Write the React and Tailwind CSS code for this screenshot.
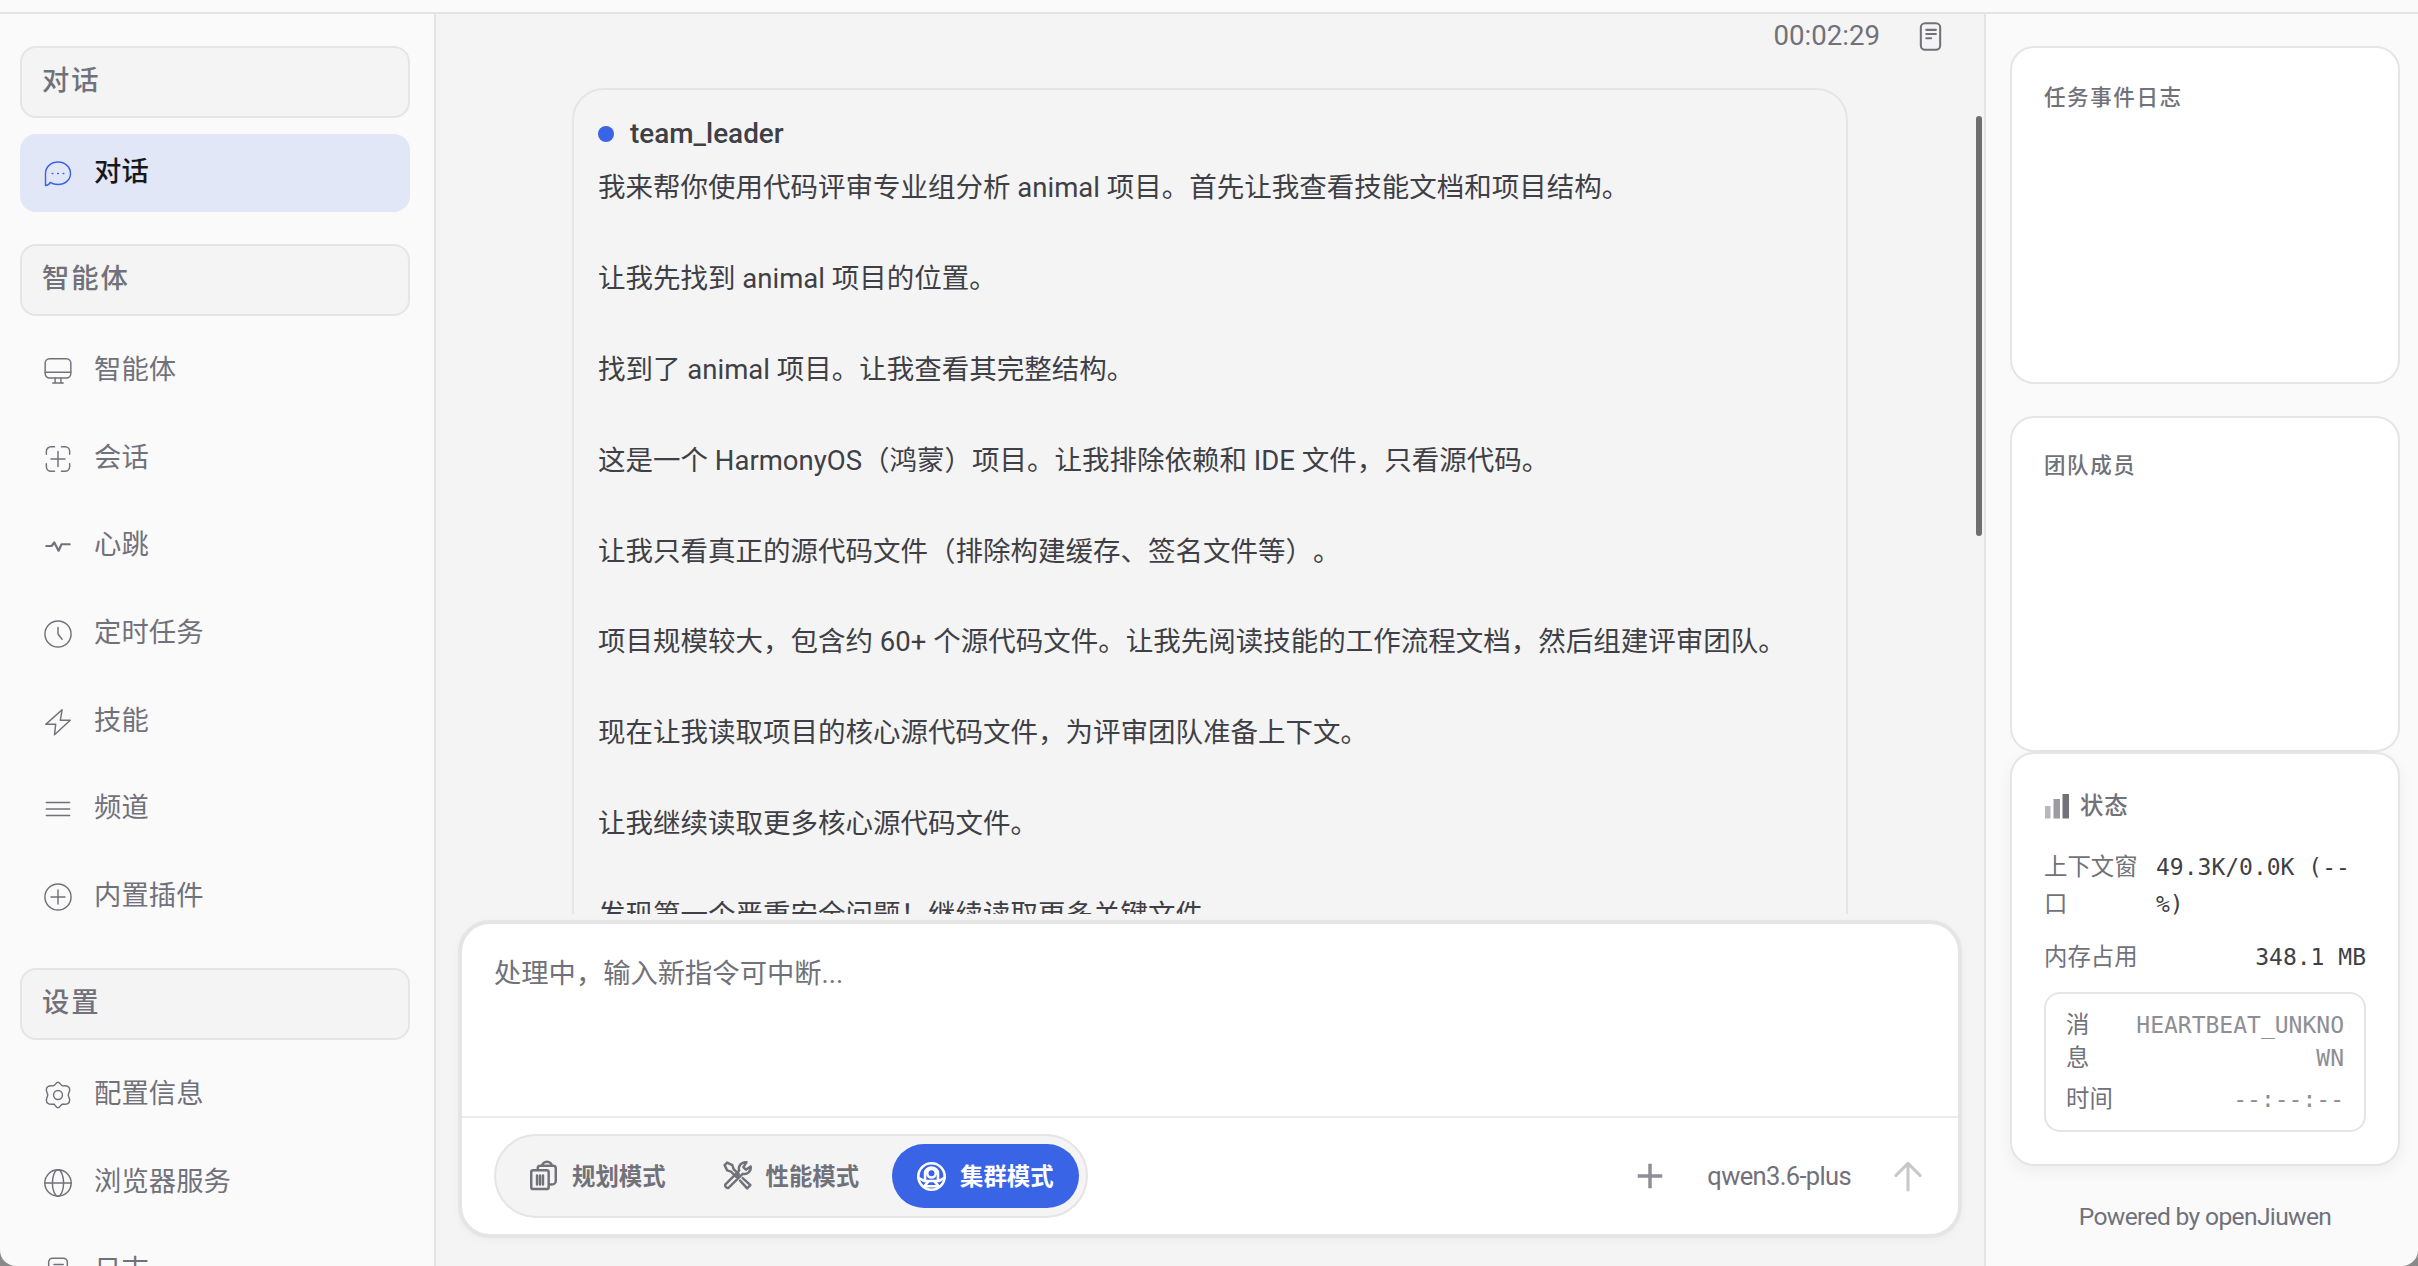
const font = "font-[Roboto,'Noto_Sans_CJK_SC',sans-serif]";

function Icon({ children, className = "h-7 w-7", sw = 1.25 }) {
  return (
    <svg
      viewBox="0 0 24 24"
      fill="none"
      stroke="currentColor"
      strokeWidth={sw}
      strokeLinecap="round"
      strokeLinejoin="round"
      className={`shrink-0 ${className}`}
    >
      {children}
    </svg>
  );
}

const icons = {
  chat: (
    <>
      <path d="M1.300 21.800V11.500C1.300 6 6 1.800 12 1.800S22.700 6 22.700 11.500 18 21 12 21c-2.500 0-4.800-.6-6.600-1.800-.8 1.600-2.200 2.600-4.100 2.600z" />
      <path d="M7 11.500h.6M11.700 11.500h.6M16.400 11.500h.6" />
    </>
  ),
  monitor: (
    <>
      <rect x="1" y="1.500" width="22" height="16.500" rx="3.800" />
      <path d="M1 13h22M9.500 18v3.500M14.500 18v3.500M7.500 22.300h9" />
    </>
  ),
  session: (
    <>
      <path d="M2 8V5.500a4 4 0 0 1 4-4h3M15 1.500h3a4 4 0 0 1 4 4V8M22 16v2.500a4 4 0 0 1-4 4h-3M9 22.500H6a4 4 0 0 1-4-4V16" />
      <path d="M12 5.500v13M6 12h12" />
    </>
  ),
  pulse: <path d="M2 12h4.500l2.300-3 3.700 7 2.500-5.500h7" strokeWidth="1.900" />,
  clock: (
    <>
      <circle cx="12" cy="12" r="11.200" />
      <path d="M12 6.500V12l3.500 4.500" />
    </>
  ),
  bolt: <path d="M15.500 1.500 1.500 14H10l-1 9L22.500 10.500H14z" />,
  menu: <path d="M2 6.500h20M2 12h20M2 17.500h20" />,
  plus: (
    <>
      <circle cx="12" cy="12" r="11.200" />
      <path d="M12 6v12M6 12h12" />
    </>
  ),
  gear: (
    <>
      <path d="M12 1C14 1 14 4.200 16.500 4.200 19.500 3.800 22 4.800 22 7.500 22 9.500 20.800 10.500 20.800 12S22 14.500 22 16.500C22 19.200 19.500 20.200 16.500 19.800 14 19.800 14 23 12 23S10 19.800 7.500 19.800C4.500 20.200 2 19.200 2 16.500 2 14.500 3.200 13.500 3.200 12S2 9.500 2 7.500C2 4.800 4.500 3.800 7.500 4.200 10 4.200 10 1 12 1z" />
      <circle cx="12" cy="12" r="3.800" />
    </>
  ),
  globe: (
    <>
      <circle cx="12" cy="12" r="11.300" />
      <ellipse cx="12" cy="12" rx="4.800" ry="11.300" />
      <path d="M.7 12h22.600" />
    </>
  ),
  log: (
    <>
      <rect x="4" y="1" width="16" height="22" rx="3.500" />
      <path d="M8.500 6.500h8M8.500 10h8M8.500 13.500h4" />
    </>
  ),
};

const groups = [
  { title: "对话", items: [["对话", "chat"]] },
  {
    title: "智能体",
    items: [
      ["智能体", "monitor"],
      ["会话", "session"],
      ["心跳", "pulse"],
      ["定时任务", "clock"],
      ["技能", "bolt"],
      ["频道", "menu"],
      ["内置插件", "plus"],
    ],
  },
  {
    title: "设置",
    items: [
      ["配置信息", "gear"],
      ["浏览器服务", "globe"],
      ["日志", "log"],
    ],
  },
];

const messages = [
  "我来帮你使用代码评审专业组分析 animal 项目。首先让我查看技能文档和项目结构。",
  "让我先找到 animal 项目的位置。",
  "找到了 animal 项目。让我查看其完整结构。",
  "这是一个 HarmonyOS（鸿蒙）项目。让我排除依赖和 IDE 文件，只看源代码。",
  "让我只看真正的源代码文件（排除构建缓存、签名文件等）。",
  "项目规模较大，包含约 60+ 个源代码文件。让我先阅读技能的工作流程文档，然后组建评审团队。",
  "现在让我读取项目的核心源代码文件，为评审团队准备上下文。",
  "让我继续读取更多核心源代码文件。",
  "发现第一个严重安全问题！继续读取更多关键文件",
];

function Sidebar() {
  return (
    <aside className="w-[436px] shrink-0 overflow-hidden border-r-2 border-[#e4e4e6] bg-[#fafafa] pt-8 pl-5">
      {groups.map((group) => (
        <div key={group.title} className="mb-8 w-[390px]">
          <div className="flex h-[72px] items-center rounded-2xl border-2 border-[#e5e5e6] bg-[#f4f4f4] pb-0.5 pl-5 text-[27.300px] font-medium tracking-[1.900px] text-[#71717a]">
            {group.title}
          </div>
          <nav className="mt-4 flex flex-col gap-[9.700px]">
            {group.items.map(([label, icon]) => (
              <div
                key={label}
                className={
                  icon === "chat"
                    ? "flex h-[78px] items-center rounded-2xl bg-[#e1e7f7] pl-6 text-[27.300px] font-medium text-[#18181b]"
                    : "flex h-[78px] items-center rounded-2xl pl-6 text-[27.300px] text-[#71717a]"
                }
              >
                <Icon className={icon === "chat" ? "mt-0.5 h-7 w-7 text-[#3a64e6]" : "h-7 w-7"}>
                  {icons[icon]}
                </Icon>
                <span className="-mt-px ml-[22px] tracking-[.1px]">{label}</span>
              </div>
            ))}
          </nav>
        </div>
      ))}
    </aside>
  );
}

function Composer() {
  return (
    <div className="mx-[22px] mt-1.5 flex h-[318px] shrink-0 flex-col rounded-[32px] border-4 border-[#e5e5e6] bg-white shadow-[0_2px_8px_rgba(0,0,0,0.03)]">
      <div className="h-[192px] pt-[30px] pl-[32px] text-[27.300px] leading-[40px] text-[#71717a]">
        处理中，输入新指令可中断...
      </div>
      <div className="flex flex-1 items-center border-t-2 border-[#ebebec] pr-[34px] pl-8">
        <div className="flex h-[84px] w-[594px] items-center rounded-full border-2 border-[#e5e5e6] bg-[#f4f4f4] pr-[7px] text-[23.400px] font-bold text-[#71717a]">
          <div className="flex items-center pl-[32px]">
            <Icon className="h-[31px] w-[31px]" sw={1.900}>
              <rect x="2.500" y="8" width="13.500" height="14.500" rx="1.500" />
              <path d="M7.500 7.500V6.500a2 2 0 0 1 2-2h10a2 2 0 0 1 2 2V16a3 3 0 0 1-3 3h-2M11 4.500a3.700 3.200 0 0 1 7.400 0zM7 12v7M9.300 12v7M11.600 12v7" />
            </Icon>
            <span className="mt-[3px] ml-[13px]">规划模式</span>
          </div>
          <div className="flex items-center pl-[56px]">
            <Icon className="h-[31px] w-[31px]" sw={1.900}>
              <path d="m2 4 2-2 4 2 1 3 4 4-2 2-4-4-3-1zM22.200 5l-3.700 2.500L16.500 5.500 19 1.800a5 5 0 0 0-5.700 6.400L2.500 19a2 2 0 0 0 2.500 2.500L16 10.700A5 5 0 0 0 22.200 5zM14 16l5.500 6 2.500-2.500L16 14" />
            </Icon>
            <span className="mt-[3px] ml-[13px]">性能模式</span>
          </div>
          <div className="ml-auto flex h-16 w-[187px] items-center rounded-full bg-[#3a64e6] pl-[24px] text-white">
            <Icon className="h-[31px] w-[31px]" sw={2}>
              <circle cx="12" cy="12" r="10.200" />
              <circle cx="12" cy="9.500" r="3.300" />
              <path d="M7 15.500V9.500a5 4.500 0 0 1 10 0v6M2 13l4.500 2.500h11L22 13M6 20l3.500-4M18 20l-3.500-4M7 19.500h10" />
            </Icon>
            <span className="mt-[3px] ml-[13px]">集群模式</span>
          </div>
        </div>
        <div className="ml-auto flex items-center">
          <Icon className="h-8 w-8 text-[#8e8e94]" sw={2.600}>
            <path d="M12 2.800v18.400M2.800 12h18.400" strokeLinecap="butt" />
          </Icon>
          <span className="ml-[41px] text-[25.500px] tracking-[-.65px] text-[#71717a]">qwen3.6-plus</span>
          <Icon className="ml-[41px] h-8 w-8 text-[#c8c8cc]" sw={2.300}>
            <path d="M12 22.500V2.500M3 11.500l9-9 9 9" />
          </Icon>
        </div>
      </div>
    </div>
  );
}

function Chat() {
  return (
    <main className="relative flex min-w-0 flex-1 flex-col bg-[#f4f4f4]">
      <div className="flex h-11 shrink-0 items-center justify-end pr-[39px] text-[27.600px] text-[#71717a]">
        <span>00:02:29</span>
        <Icon className="ml-[36px] h-[29px] w-[29px]" sw={1.700}>{icons.log}</Icon>
      </div>
      <div className="h-[856px] shrink-0 overflow-hidden">
        <div className="mt-[30px] ml-[136px] h-[900px] w-[1276px] rounded-[32px] border-2 border-[#e5e5e6] px-6 pt-6 text-[27.500px] text-[#3f3f46]">
          <div className="flex h-10 items-center">
            <span className="h-4 w-4 rounded-full bg-[#3a64e6]" />
            <span className="ml-4 text-[27.900px] font-medium">team_leader</span>
          </div>
          {messages.map((text) => (
            <p
              key={text}
              className="h-[90.900px] pt-[9px] leading-[50px] whitespace-nowrap [text-spacing-trim:space-all]"
            >
              {text}
            </p>
          ))}
        </div>
      </div>
      <Composer />
      <div className="absolute top-[102px] right-[2px] h-[420px] w-1.5 rounded-full bg-[#6e6e6f]" />
    </main>
  );
}

function StatusPanel() {
  return (
    <aside className="w-[434px] shrink-0 border-l-2 border-[#e4e4e6] bg-[#fafafa] pt-8 pl-6 text-[#71717a]">
      <section className="h-[338px] w-[390px] rounded-3xl border-2 border-[#e5e5e6] bg-white px-8 pt-8 text-[21.500px] leading-[36px] font-medium tracking-[1.600px]">
        任务事件日志
      </section>
      <section className="mt-8 h-[336px] w-[390px] rounded-3xl border-2 border-[#e5e5e6] bg-white px-8 pt-[30px] text-[21.500px] leading-[36px] font-medium tracking-[1.600px]">
        团队成员
      </section>
      <section className="h-[414px] w-[390px] rounded-3xl border-2 border-[#e5e5e6] bg-white px-8 pt-[34px] text-[23.400px] leading-[37px] shadow-[0_6px_16px_rgba(0,0,0,0.05)]">
        <div className="flex items-center font-medium">
          <svg viewBox="0 0 25 25" className="ml-px h-[25px] w-[25px] fill-[#71717a]">
            <rect x="0" y="12" width="5.500" height="12.500" opacity=".5" />
            <rect x="8.500" y="5" width="6.500" height="19.500" opacity=".7" />
            <rect x="17.500" y="0" width="6.500" height="24.500" />
          </svg>
          <span className="ml-[10px] tracking-[.8px]">状态</span>
        </div>
        <div className="mt-[24px] flex justify-between">
          <span className="w-[95px]">上下文窗口</span>
          <span className="w-[210px] font-['DejaVu_Sans_Mono',monospace] text-[23px] text-[#3f3f46]">
            49.3K/0.0K (--
            <br />
            %)
          </span>
        </div>
        <div className="mt-[16px] flex justify-between">
          <span>内存占用</span>
          <span className="font-['DejaVu_Sans_Mono',monospace] text-[23px] text-[#3f3f46]">348.1 MB</span>
        </div>
        <div className="mt-[16px] h-[140px] w-[322px] rounded-2xl border-2 border-[#e5e5e6] px-5 pt-[15px] leading-[33px]">
          <div className="flex justify-between">
            <span className="w-6">消息</span>
            <span className="text-right font-['DejaVu_Sans_Mono',monospace] text-[23px] text-[#8e8e94]">
              HEARTBEAT_UNKNO
              <br />
              WN
            </span>
          </div>
          <div className="mt-[8px] flex justify-between">
            <span>时间</span>
            <span className="font-['DejaVu_Sans_Mono',monospace] text-[23px] text-[#8e8e94]">--:--:--</span>
          </div>
        </div>
      </section>
      <div className="mt-8 w-[390px] text-center text-[24.600px] leading-[38px] tracking-[-.65px]">
        Powered by openJiuwen
      </div>
    </aside>
  );
}

export default function App() {
  return (
    <div className="h-[1266px] w-[2418px] overflow-hidden bg-[#8a8a8a]">
      <div className={`flex h-full w-full flex-col overflow-hidden rounded-b-2xl ${font}`}>
        <header className="h-[14px] shrink-0 border-b-2 border-[#e4e4e6] bg-[#fafafa]" />
        <div className="flex min-h-0 flex-1">
          <Sidebar />
          <Chat />
          <StatusPanel />
        </div>
      </div>
    </div>
  );
}
